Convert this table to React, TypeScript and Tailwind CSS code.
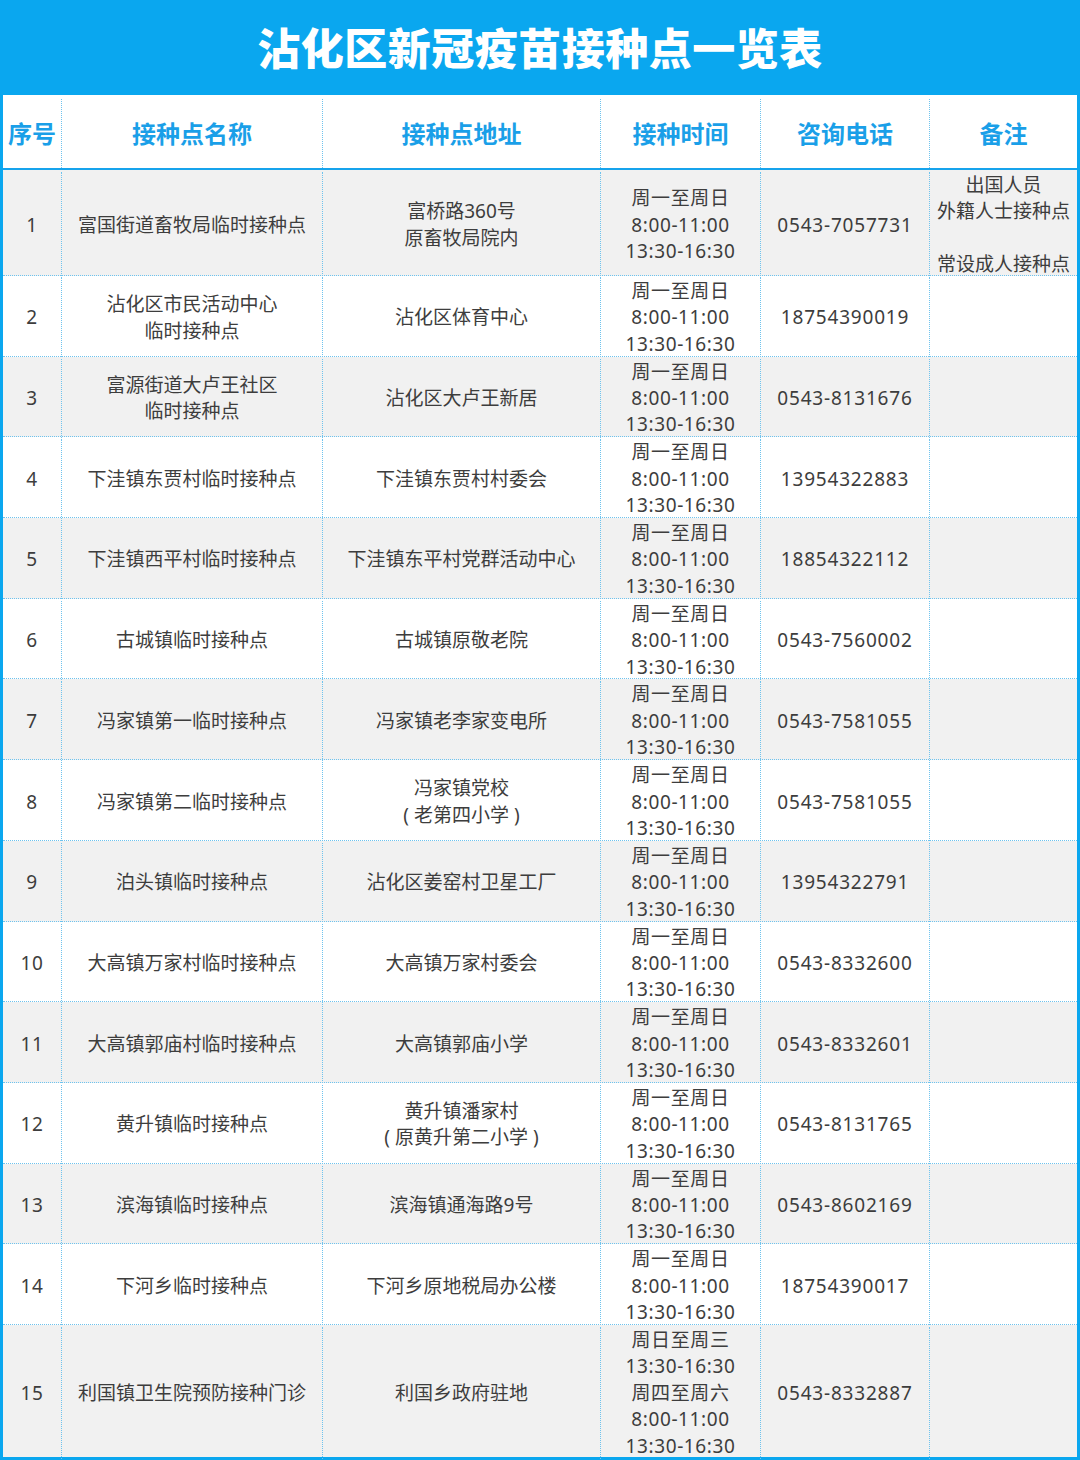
const rows = [
  {
    no: "1",
    name: ["富国街道畜牧局临时接种点"],
    addr: ["富桥路360号", "原畜牧局院内"],
    tel: "0543-7057731",
    note: ["出国人员", "外籍人士接种点", "", "常设成人接种点"],
  },
  { no: "2", name: ["沾化区市民活动中心", "临时接种点"], addr: ["沾化区体育中心"], tel: "18754390019" },
  { no: "3", name: ["富源街道大卢王社区", "临时接种点"], addr: ["沾化区大卢王新居"], tel: "0543-8131676" },
  { no: "4", name: ["下洼镇东贾村临时接种点"], addr: ["下洼镇东贾村村委会"], tel: "13954322883" },
  { no: "5", name: ["下洼镇西平村临时接种点"], addr: ["下洼镇东平村党群活动中心"], tel: "18854322112" },
  { no: "6", name: ["古城镇临时接种点"], addr: ["古城镇原敬老院"], tel: "0543-7560002" },
  { no: "7", name: ["冯家镇第一临时接种点"], addr: ["冯家镇老李家变电所"], tel: "0543-7581055" },
  { no: "8", name: ["冯家镇第二临时接种点"], addr: ["冯家镇党校", "( 老第四小学 )"], tel: "0543-7581055" },
  { no: "9", name: ["泊头镇临时接种点"], addr: ["沾化区姜窑村卫星工厂"], tel: "13954322791" },
  { no: "10", name: ["大高镇万家村临时接种点"], addr: ["大高镇万家村委会"], tel: "0543-8332600" },
  { no: "11", name: ["大高镇郭庙村临时接种点"], addr: ["大高镇郭庙小学"], tel: "0543-8332601" },
  { no: "12", name: ["黄升镇临时接种点"], addr: ["黄升镇潘家村", "( 原黄升第二小学 )"], tel: "0543-8131765" },
  { no: "13", name: ["滨海镇临时接种点"], addr: ["滨海镇通海路9号"], tel: "0543-8602169" },
  { no: "14", name: ["下河乡临时接种点"], addr: ["下河乡原地税局办公楼"], tel: "18754390017" },
  {
    no: "15",
    name: ["利国镇卫生院预防接种门诊"],
    addr: ["利国乡政府驻地"],
    tel: "0543-8332887",
    time: ["周日至周三", "13:30-16:30", "周四至周六", "8:00-11:00", "13:30-16:30"],
  },
];

const defaultTime = ["周一至周日", "8:00-11:00", "13:30-16:30"];
const headers = ["序号", "接种点名称", "接种点地址", "接种时间", "咨询电话", "备注"];

function Lines({ lines }: { lines: string[] }) {
  return (
    <>
      {lines.map((l, i) => (
        <div key={i} className="h-[26.4px] whitespace-pre">
          {l}
        </div>
      ))}
    </>
  );
}

const cell = "flex flex-col items-center justify-center text-center";
const sep = "border-l border-dotted border-[#6ec3ee]";

export default function App() {
  return (
    <div
      className="w-[1080px] bg-white"
      style={{ fontFamily: '"Noto Sans", "Noto Sans CJK SC", sans-serif' }}
    >
      <div className="flex h-[95px] items-center justify-center bg-[#0aa7ef] pt-[3px]">
        <h1 className="text-[43px] font-black tracking-[0.5px] text-white">沾化区新冠疫苗接种点一览表</h1>
      </div>

      <div className="border-x-[3px] border-b-[3px] border-[#0aa7ef]">
        <div className="grid h-[75px] grid-cols-[58px_261px_278px_160px_169px_148px] border-b-2 border-[#16a3ec] bg-white pt-[4px]">
          {headers.map((h, i) => (
            <div
              key={h}
              className={`${cell} text-[24px] font-bold text-[#1a9fe8] ${i > 0 ? sep : ""}`}
            >
              {h}
            </div>
          ))}
        </div>

        {rows.map((r, idx) => (
          <div
            key={r.no}
            className={`grid grid-cols-[58px_261px_278px_160px_169px_148px] pt-[2px] text-[19px] leading-[26.4px] text-[#3d3d3d] ${
              idx % 2 === 0 ? "bg-[#f1f1f1]" : "bg-white"
            } ${idx === 0 ? "h-[106px]" : idx === rows.length - 1 ? "h-[132px]" : "h-[80.7px]"} ${
              idx < rows.length - 1 ? "border-b border-dotted border-[#6ec3ee]" : ""
            }`}
          >
            <div className={`${cell} tracking-[0.6px]`}>{r.no}</div>
            <div className={`${cell} ${sep}`}>
              <Lines lines={r.name} />
            </div>
            <div className={`${cell} ${sep}`}>
              <Lines lines={r.addr} />
            </div>
            <div className={`${cell} ${sep} tracking-[0.6px]`}>
              <Lines lines={r.time ?? defaultTime} />
            </div>
            <div className={`${cell} ${sep} tracking-[0.8px]`}>{r.tel}</div>
            <div className={`${cell} ${sep}`}>{r.note && <Lines lines={r.note} />}</div>
          </div>
        ))}
      </div>
    </div>
  );
}
